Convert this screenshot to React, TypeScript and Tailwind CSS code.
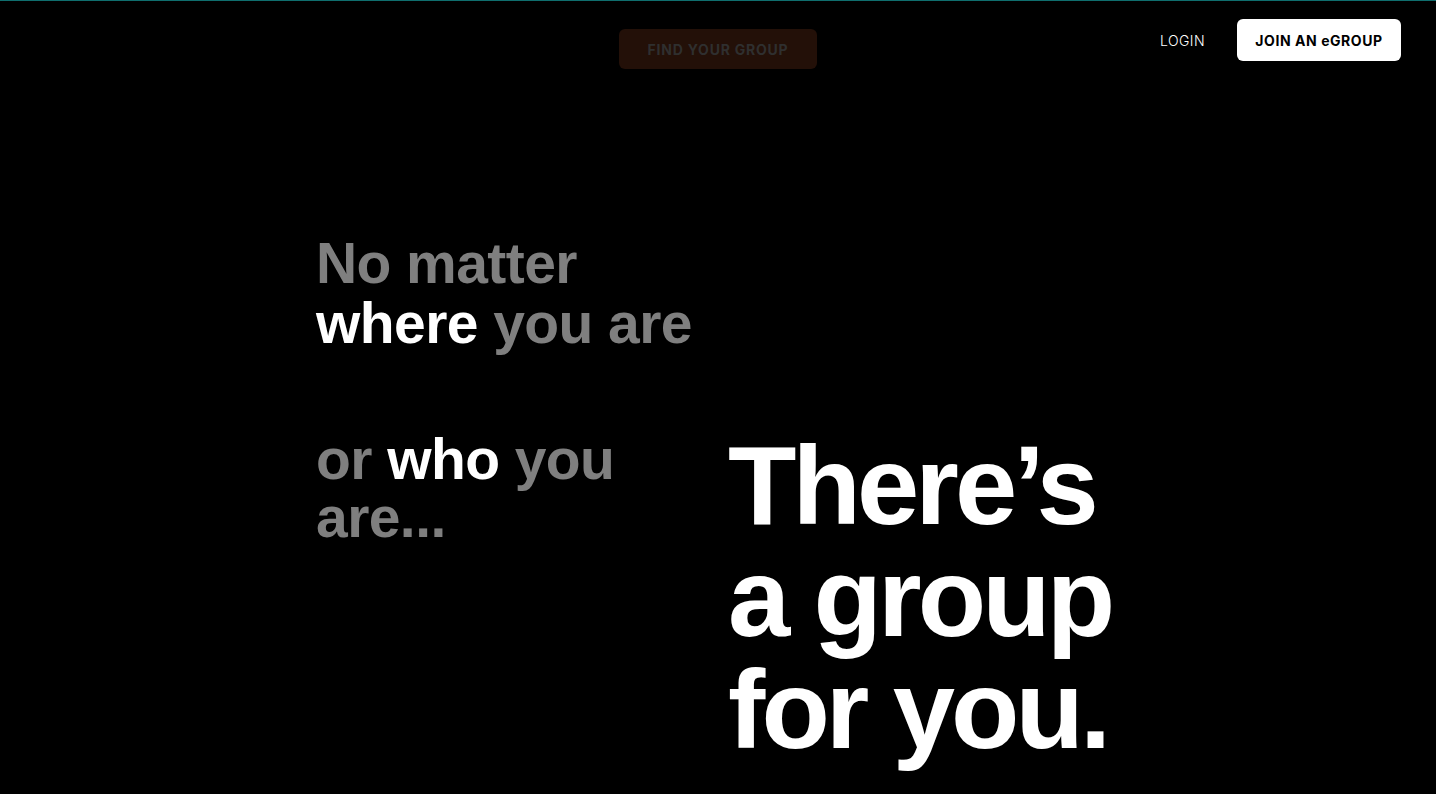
import React from 'react';

const nav = { fontFamily: 'Inter, "Noto Sans", sans-serif' };
const head = { fontFamily: '"Liberation Sans", Arial, sans-serif' };

const Header: React.FC = () => (
  <header className="grid grid-cols-3 items-start px-[35px] pt-[18px]" style={nav}>
    <div />
    <div className="flex justify-center pt-[10px]">
      <button className="h-[40px] w-[198px] rounded-[6px] bg-[#231008] text-[14px] font-bold tracking-[0.055em] text-[#2f2f2f]">
        FIND YOUR GROUP
      </button>
    </div>
    <div className="flex items-center justify-end gap-[32px]">
      <a className="text-[14px] font-light tracking-[0.03em] text-white">LOGIN</a>
      <button className="h-[42px] w-[164px] rounded-[6px] bg-white text-[14px] font-bold tracking-[0.04em] text-black">
        JOIN AN eGROUP
      </button>
    </div>
  </header>
);

const App: React.FC = () => (
  <div className="min-h-screen border-t border-[#0f6e6e] bg-black">
    <Header />
    <main className="mx-auto grid w-[804px] grid-cols-[412px_1fr] pt-[164px]" style={head}>
      <div className="col-start-1 row-start-1 text-[57px] font-bold leading-[60px] tracking-[-0.01em] text-[#7f7f7f]">
        <p>No matter</p>
        <p>
          <span className="text-white">where</span> you are
        </p>
      </div>
      <div className="col-start-1 row-start-2 mt-[77px] w-[320px] text-[57px] font-bold leading-[58px] tracking-[-0.01em] text-[#7f7f7f]">
        or <span className="text-white">who</span> you are...
      </div>
      <div className="col-start-2 row-start-2 mt-[77px] text-[112px] font-bold leading-[112px] tracking-[-0.035em] text-white">
        <p>There’s</p>
        <p>a group</p>
        <p>for you.</p>
      </div>
    </main>
  </div>
);

export default App;
